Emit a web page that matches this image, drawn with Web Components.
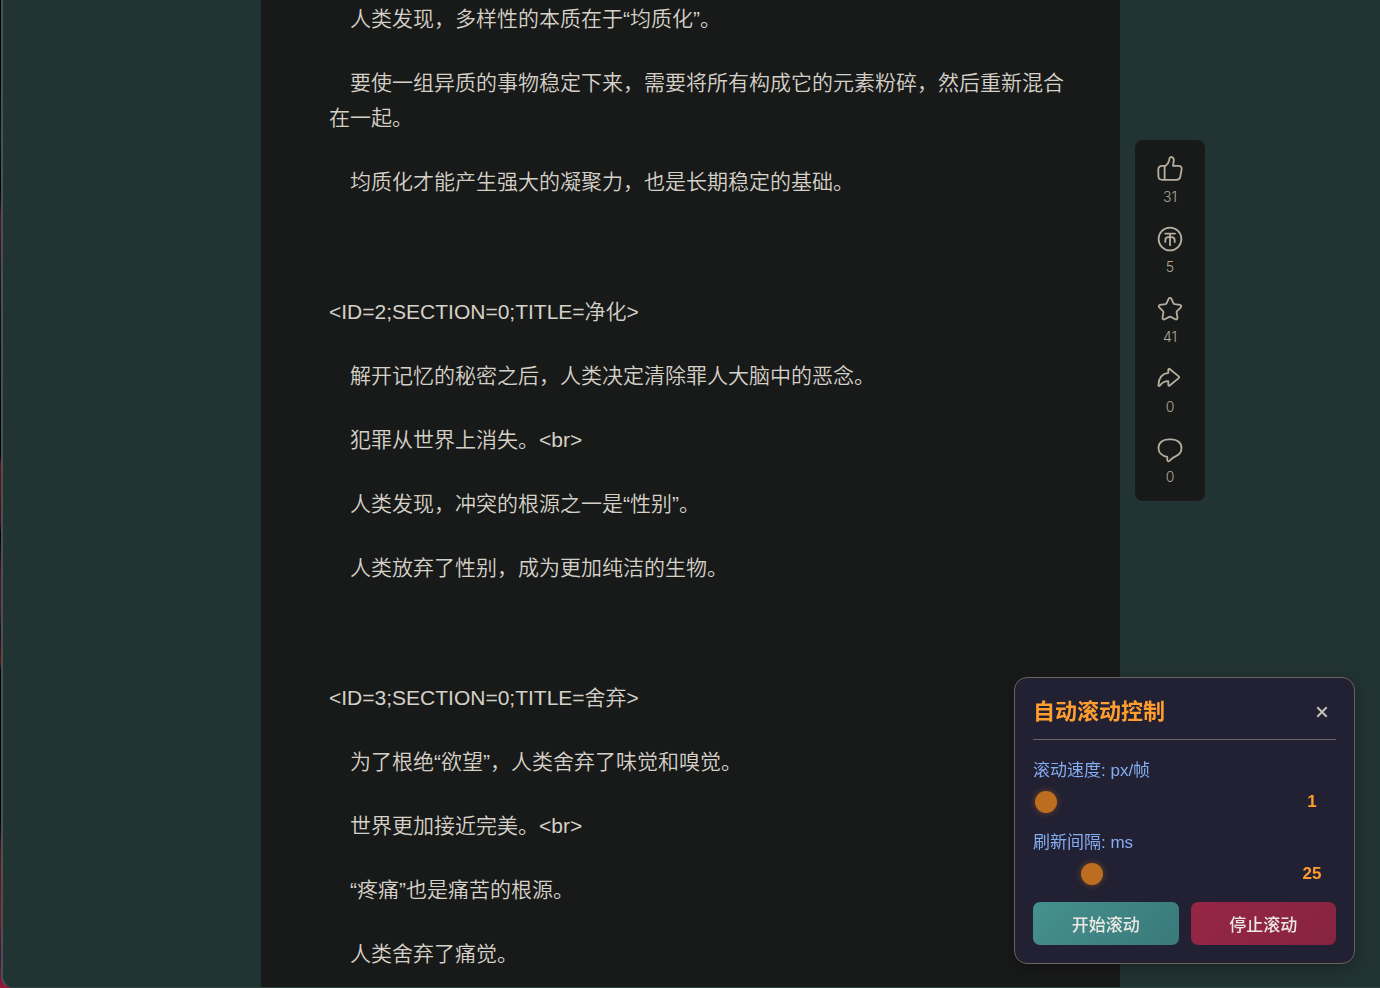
<!DOCTYPE html>
<html lang="zh-CN">
<head>
<meta charset="utf-8">
<meta name="viewport" content="width=device-width, initial-scale=1">
<title>自动滚动阅读</title>
<style>
  html, body { margin: 0; }
  body {
    background: #000;
    color: #d6d1c8;
    font-family: "Liberation Sans", "Noto Sans CJK SC", sans-serif;
  }
</style>
</head>
<body>
<reader-page>
  <reader-article>
    <reader-section>
      <p>人类发现，多样性的本质在于“均质化”。</p>
      <p>要使一组异质的事物稳定下来，需要将所有构成它的元素粉碎，然后重新混合在一起。</p>
      <p>均质化才能产生强大的凝聚力，也是长期稳定的基础。</p>
    </reader-section>
    <reader-section>
      <h2>&lt;ID=2;SECTION=0;TITLE=净化&gt;</h2>
      <p>解开记忆的秘密之后，人类决定清除罪人大脑中的恶念。</p>
      <p>犯罪从世界上消失。&lt;br&gt;</p>
      <p>人类发现，冲突的根源之一是“性别”。</p>
      <p>人类放弃了性别，成为更加纯洁的生物。</p>
    </reader-section>
    <reader-section>
      <h2>&lt;ID=3;SECTION=0;TITLE=舍弃&gt;</h2>
      <p>为了根绝“欲望”，人类舍弃了味觉和嗅觉。</p>
      <p>世界更加接近完美。&lt;br&gt;</p>
      <p>“疼痛”也是痛苦的根源。</p>
      <p>人类舍弃了痛觉。</p>
    </reader-section>
  </reader-article>
  <action-bar slot="aside">
    <action-item label="点赞" count="31">
      <svg viewBox="0 0 28 28"><path d="M6.2 10.8h3.4c1.8-1.3 3-3.100 3.500-5.300l.4-2c.3-1.200 1.300-1.800 2.400-1.400 1.400.5 2.100 1.900 1.900 3.500l-.8 5.200h5.400c2.300 0 3.600 1.600 3.200 3.800l-1.300 7c-.4 2.100-1.700 3.200-3.800 3.200H6.200c-2.400 0-3.700-1.200-3.800-3.500l-.1-6.600c0-2.400 1.400-3.900 3.900-3.900zM8.600 11v13.600"/></svg>
    </action-item>
    <action-item label="投币" count="5">
      <svg viewBox="0 0 28 28"><circle cx="14" cy="14" r="11.4"/><path d="M9.2 8.600h9.800M14 8.600v11.600M9.300 17v-1.500c0-2 1.300-3.300 3.200-3.300h3c1.900 0 3.200 1.300 3.200 3.300V17"/></svg>
    </action-item>
    <action-item label="收藏" count="41">
      <svg viewBox="0 0 28 28"><path d="M12.700 3.600c.5-1.100 2.100-1.100 2.600 0l2.200 4.700c.3.500.7.800 1.200.9l5.200.7c1.300.2 1.800 1.600.9 2.500l-3.800 3.700c-.4.400-.5.900-.4 1.400l.9 5.200c.2 1.300-1.100 2.200-2.200 1.600L14.700 21.900c-.4-.2-1-.2-1.400 0l-4.600 2.400c-1.100.6-2.400-.3-2.200-1.600l.9-5.200c.1-.5 0-1-.4-1.400l-3.800-3.700c-.9-.9-.4-2.300.9-2.500l5.200-.7c.5-.1.900-.4 1.200-.9z"/></svg>
    </action-item>
    <action-item label="分享" count="0">
      <svg viewBox="0 0 28 28"><path d="M12.300 7.500V4.600c0-.9.800-1.200 1.400-.6l9 7.400c.6.500.6 1.200 0 1.700l-9 7.400c-.6.600-1.400.3-1.400-.6v-3.800c-3.700 0-6.300 1.300-8.300 4.400-.6.900-1.700.6-1.600-.5.300-6.700 3.600-11.300 9.900-12.100z"/></svg>
    </action-item>
    <action-item label="评论" count="0">
      <svg viewBox="0 0 28 28"><path d="M12.500 4.300h3c5.900 0 10 3.600 10 8.700 0 3.600-2 6.400-5.200 7.900-2.500 1.100-4.800 2.700-6.900 4.900-.9.900-2.100.5-2.100-.7v-3.300c-5.200-.6-8.800-4-8.800-8.800 0-5.100 4.100-8.700 10-8.700z"/></svg>
    </action-item>
  </action-bar>
  <scroll-panel slot="overlay" heading="自动滚动控制">
    <scroll-range label="滚动速度: px/帧" min="1" max="20" value="1"></scroll-range>
    <scroll-range label="刷新间隔: ms" min="5" max="100" value="25"></scroll-range>
    <panel-button slot="actions" kind="start">开始滚动</panel-button>
    <panel-button slot="actions" kind="stop">停止滚动</panel-button>
  </scroll-panel>
</reader-page>

<script>
class Base extends HTMLElement {
  connectedCallback() {
    if (this.shadowRoot) return;
    this.attachShadow({ mode: "open" }).innerHTML = this.render();
    this.ready();
  }
  attr(name) { return this.getAttribute(name) || ""; }
  ready() {}
}

customElements.define("reader-page", class extends Base {
  render() {
    return `<style>
      :host {
        display: block; padding-left: 1px; min-height: 100vh; box-sizing: border-box;
        background: linear-gradient(to bottom, #000 0 8%, #101028 14%, #000 19%, #55102e 22%, #150a20 32%, #000 46%, #700c18 47%, #500818 53%, #000 54%, #5a0d1c 58%, #4a1644 62%, #280510 64%, #6d0d14 67%, #000 68%, #000 83%, #60101c 86%, #801020 93%, #401040 97%, #a01838 100%);
      }
      .window {
        display: grid; grid-template-columns: minmax(0, 258fr) minmax(0, 859px) minmax(100px, 260fr);
        min-height: 100vh; box-sizing: border-box; background: #223333;
        border-left: 2px solid #425453; border-bottom: 1px solid #314443;
        border-bottom-left-radius: 12px; overflow: hidden;
      }
      main { grid-column: 2; background: #181a19; }
      aside { padding: 140px 0 0 15px; }
    </style>
    <div class="window">
      <main><slot></slot></main>
      <aside><slot name="aside"></slot></aside>
    </div>
    <slot name="overlay"></slot>`;
  }
});

customElements.define("reader-article", class extends Base {
  render() {
    return `<style>
      :host { display: flex; flex-direction: column; gap: 95px; padding: 1px 52px 14px 68px; }
    </style><slot></slot>`;
  }
});

customElements.define("reader-section", class extends Base {
  render() {
    return `<style>
      :host { display: flex; flex-direction: column; gap: 29px; }
      ::slotted(*) { margin: 0; font-size: 21px; line-height: 35px; font-weight: 350; }
      ::slotted(p) { text-indent: 21px; }
    </style><slot></slot>`;
  }
});

customElements.define("action-bar", class extends Base {
  render() {
    return `<style>
      :host {
        display: flex; flex-direction: column; gap: 20px; width: 70px; box-sizing: border-box;
        padding: 15px 0 16px; border-radius: 8px; background: #181a19;
      }
    </style><slot></slot>`;
  }
});

customElements.define("action-item", class extends Base {
  render() {
    return `<style>
      :host { display: block; color: #b0a99d; }
      button {
        display: flex; flex-direction: column; align-items: center; gap: 5px; width: 100%;
        padding: 0; border: 0; background: none; color: inherit; cursor: pointer;
        font: 300 14px/17px Inter, "Liberation Sans", sans-serif;
      }
      ::slotted(svg) {
        display: block; width: 28px; height: 28px; fill: none; stroke: #b7ae9f;
        stroke-width: 1.8; stroke-linecap: round; stroke-linejoin: round;
      }
    </style>
    <button type="button" title="${this.attr("label")}"><slot></slot><span>${this.attr("count")}</span></button>`;
  }
});

customElements.define("scroll-panel", class extends Base {
  render() {
    return `<style>
      :host {
        position: fixed; right: 25px; bottom: 24px; width: 341px; box-sizing: border-box;
        display: flex; flex-direction: column; gap: 10px; padding: 19px 18px 18px;
        background: #222133; border: 1px solid #69645e; border-radius: 13px;
        box-shadow: 0 4px 16px rgba(0, 0, 0, .3);
      }
      header {
        display: flex; align-items: center; justify-content: space-between;
        padding-bottom: 12px; margin-bottom: 8px; border-bottom: 1px solid #69645e;
      }
      h3 { margin: 0; font-size: 22px; line-height: 30px; font-weight: 700; color: #ff9d2f; }
      button {
        display: grid; place-items: center; width: 28px; height: 28px; padding: 0;
        border: 0; background: none; cursor: pointer;
      }
      svg { width: 12px; height: 12px; fill: none; stroke: #c6c1b8; stroke-width: 2; }
      .actions { display: grid; grid-template-columns: 1fr 1fr; gap: 12px; }
    </style>
    <header>
      <h3>${this.attr("heading")}</h3>
      <button type="button" aria-label="关闭"><svg viewBox="0 0 12 12"><path d="M1.300 1.300l9.400 9.400M10.700 1.300l-9.400 9.400"/></svg></button>
    </header>
    <slot></slot>
    <div class="actions"><slot name="actions"></slot></div>`;
  }
  ready() {
    this.shadowRoot.querySelector("button").addEventListener("click", () => this.remove());
  }
});

customElements.define("scroll-range", class extends Base {
  render() {
    const v = this.attr("value");
    return `<style>
      :host { display: block; }
      label { display: block; font-size: 17px; line-height: 26px; color: #84adf2; }
      .row { display: flex; align-items: center; gap: 12px; height: 36px; padding-left: 2px; }
      input {
        flex: 1; min-width: 0; height: 22px; margin: 0; background: none;
        -webkit-appearance: none; appearance: none; cursor: pointer;
      }
      input::-webkit-slider-runnable-track { height: 22px; background: none; }
      input::-webkit-slider-thumb {
        -webkit-appearance: none; width: 22px; height: 22px; border-radius: 50%;
        background: #bd6d20; box-shadow: 0 0 6px rgba(189, 109, 32, .5);
      }
      output { width: 48px; text-align: center; font-size: 17px; font-weight: 700; color: #ff9d2f; }
    </style>
    <label for="range">${this.attr("label")}</label>
    <div class="row">
      <input id="range" type="range" min="${this.attr("min")}" max="${this.attr("max")}" value="${v}">
      <output for="range">${v}</output>
    </div>`;
  }
  ready() {
    const input = this.shadowRoot.querySelector("input");
    const output = this.shadowRoot.querySelector("output");
    input.addEventListener("input", () => { output.textContent = input.value; });
  }
});

customElements.define("panel-button", class extends Base {
  render() {
    return `<style>
      :host { display: block; }
      button {
        display: block; width: 100%; height: 43px; padding: 0; border: 0; border-radius: 7px;
        background: linear-gradient(135deg, #45918f, #39797a); color: #ece8e2;
        font: inherit; font-size: 17px; font-weight: 500; cursor: pointer;
      }
      :host([kind="stop"]) button { background: linear-gradient(135deg, #962644, #86243f); }
    </style>
    <button type="button"><slot></slot></button>`;
  }
});
</script>
</body>
</html>
